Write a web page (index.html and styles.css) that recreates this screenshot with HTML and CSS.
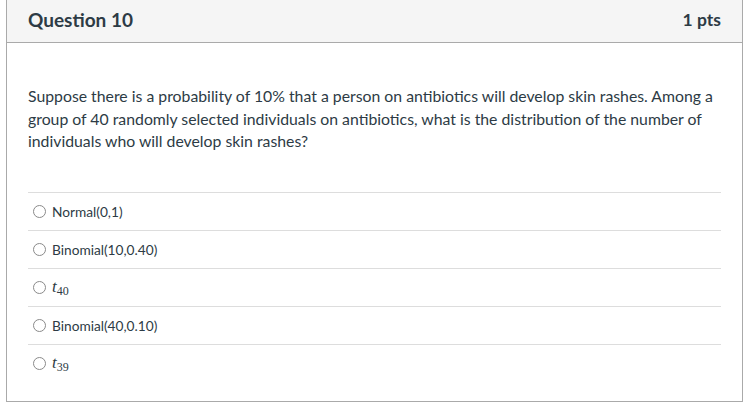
FILE: index.html
```html
<!DOCTYPE html>
<html>
<head>
<meta charset="utf-8">
<link rel="stylesheet" href="styles.css">
</head>
<body>
<div class="question">
  <div class="q-header">
    <span class="q-title">Question 10</span>
    <span class="q-pts">1 pts</span>
  </div>
  <div class="q-body">
    <p class="q-text">Suppose there is a probability of 10% that a person on antibiotics will develop skin rashes. Among a group of 40 randomly selected individuals on antibiotics, what is the distribution of the number of individuals who will develop skin rashes?</p>
    <div class="answers">
      <label class="answer"><span class="radio"></span><span class="label">Normal(0,1)</span></label>
      <label class="answer"><span class="radio"></span><span class="label">Binomial(10,0.40)</span></label>
      <label class="answer"><span class="radio"></span><span class="math"><i>t</i><sub>40</sub></span></label>
      <label class="answer"><span class="radio"></span><span class="label">Binomial(40,0.10)</span></label>
      <label class="answer"><span class="radio"></span><span class="math"><i>t</i><sub>39</sub></span></label>
    </div>
  </div>
</div>
</body>
</html>
```
FILE: styles.css
```css
html, body {
  margin: 0;
  padding: 0;
  background: #fff;
}
body {
  font-family: Lato, "Liberation Sans", sans-serif;
  color: #2d3b45;
}
.question {
  margin-left: 6px;
  width: 735px;
  border: 1px solid #aaaaaa;
  border-top: none;
}
.q-header {
  background: #f5f5f5;
  border-bottom: 1px solid #aaaaaa;
  display: flex;
  align-items: center;
  justify-content: space-between;
  padding: 0 21px 4px;
  box-sizing: border-box;
  height: 43px;
}
.q-title {
  font-weight: 700;
  font-size: 19px;
}
.q-pts {
  font-weight: 700;
  font-size: 17.5px;
}
.q-body {
  padding: 42px 21px 19px;
}
.q-text {
  margin: 0;
  font-size: 15.8px;
  line-height: 22.5px;
}
.answers {
  margin-top: 39px;
}
.answer {
  display: flex;
  align-items: center;
  height: 38px;
  border-top: 1px solid #dddddd;
  box-sizing: border-box;
  padding-left: 5px;
  font-size: 13.7px;
}
.radio {
  width: 11px;
  height: 11px;
  border: 1px solid #8a8a8a;
  border-radius: 50%;
  margin-right: 6px;
  flex: none;
}
.math {
  font-family: "Liberation Serif", "DejaVu Serif", serif;
  font-size: 17px;
}
.math i {
  font-style: italic;
}
.math sub {
  font-style: normal;
  font-size: 12px;
  vertical-align: -3px;
  line-height: 0;
}
```
